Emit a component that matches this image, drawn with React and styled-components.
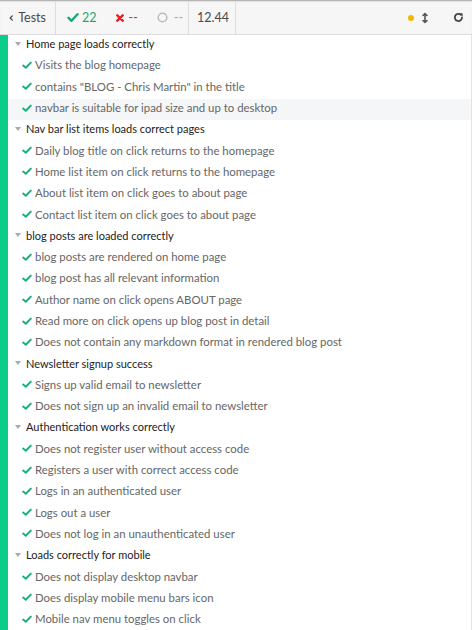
import React from "react";
import styled, { createGlobalStyle } from "styled-components";

const GlobalStyle = createGlobalStyle`
    html, body {
        margin : 0;
        padding : 0;
        background : #fff;
        font-family : Lato, "Open Sans", sans-serif;
    }
`

const Page = styled.div`
    width : 472px;
    height : 630px;
    overflow : hidden;
    display : flex;
    flex-direction : column;
`

const Header = styled.div`
    height : 35px;
    flex-shrink : 0;
    display : flex;
    align-items : stretch;
    background : #f6f6f6;
    border-top : 1px solid #b5b5b5;
    border-bottom : 1px solid #dcdcdc;
    box-sizing : border-box;
    box-shadow : inset 0 1px 1px rgba(0,0,0,0.08);
    color : #4a4a4a;
    font-size : 12.5px;
    white-space : nowrap;
`

const Section = styled.div`
    display : flex;
    align-items : center;
    gap : ${props => props.gap || 0}px;
    padding : 0 ${props => props.pad || 0}px;
    width : ${props => props.width ? props.width + "px" : "auto"};
    flex : ${props => props.grow ? 1 : "none"};
    justify-content : ${props => props.end ? "flex-end" : "flex-start"};
    border-right : ${props => props.line ? "1px solid #dcdcdc" : "none"};
    box-sizing : border-box;
`

const Stat = styled.span`
    display : flex;
    align-items : center;
    flex-shrink : 0;
    gap : ${props => props.gap || 4}px;
    color : ${props => props.color};
    margin-right : ${props => props.space || 0}px;
`

const Dot = styled.span`
    width : 6px;
    height : 6px;
    border-radius : 50%;
    background : #f7b500;
`

const Body = styled.div`
    flex : 1;
    border-left : 8px solid #0ccc8a;
    border-right : 1px solid #e4e4e4;
`

const Suite = styled.div`
    height : 21.3px;
    box-sizing : border-box;
    padding-bottom : 4px;
    display : flex;
    align-items : center;
    padding-left : 7px;
    font-size : 11px;
    color : #222;
`

const Caret = styled.span`
    width : 0;
    height : 0;
    border-left : 3.5px solid transparent;
    border-right : 3.5px solid transparent;
    border-top : 4px solid #aaa;
    margin-right : 5px;
`

const Test = styled.div`
    height : 21.3px;
    box-sizing : border-box;
    padding-bottom : 4px;
    display : flex;
    align-items : center;
    padding-left : 14px;
    font-size : 11.4px;
    color : #666;
    background : ${props => props.hover ? "#f5f6f8" : "transparent"};
`

const Check = () => (
    <svg width="10" height="10" viewBox="0 0 10 10" style={{marginRight : 3}}>
        <path d="M1.2 5.6 L3.8 7.8 L8.8 2.6" fill="none" stroke="#1bb07a" strokeWidth="2" strokeLinecap="round" strokeLinejoin="round"/>
    </svg>
)

const suites = [
    ["Home page loads correctly", ["Visits the blog homepage", "contains \"BLOG - Chris Martin\" in the title", "navbar is suitable for ipad size and up to desktop"]],
    ["Nav bar list items loads correct pages", ["Daily blog title on click returns to the homepage", "Home list item on click returns to the homepage", "About list item on click goes to about page", "Contact list item on click goes to about page"]],
    ["blog posts are loaded correctly", ["blog posts are rendered on home page", "blog post has all relevant information", "Author name on click opens ABOUT page", "Read more on click opens up blog post in detail", "Does not contain any markdown format in rendered blog post"]],
    ["Newsletter signup success", ["Signs up valid email to newsletter", "Does not sign up an invalid email to newsletter"]],
    ["Authentication works correctly", ["Does not register user without access code", "Registers a user with correct access code", "Logs in an authenticated user", "Logs out a user", "Does not log in an unauthenticated user"]],
    ["Loads correctly for mobile", ["Does not display desktop navbar", "Does display mobile menu bars icon", "Mobile nav menu toggles on click"]],
]

const App = () => {
    return(
        <>
        <GlobalStyle />
        <Page>
            <Header>
                <Section width={56} pad={9} gap={5} line>
                    <svg width="7" height="10" viewBox="0 0 7 10">
                        <path d="M5.5 1.5 L2 5 L5.5 8.5" fill="none" stroke="#444" strokeWidth="2" strokeLinecap="round" strokeLinejoin="round"/>
                    </svg>
                    Tests
                </Section>
                <Section width={133} pad={11} line>
                    <Stat color="#1ba872" space={19} gap={3}>
                        <svg width="12" height="11" viewBox="0 0 12 11">
                            <path d="M1.5 5.8 L4.5 8.8 L10.5 2.2" fill="none" stroke="#1ba872" strokeWidth="2.4" strokeLinecap="round" strokeLinejoin="round"/>
                        </svg>
                        22
                    </Stat>
                    <Stat color="#e8201f" space={19} gap={5}>
                        <svg width="8" height="8" viewBox="0 0 8 8">
                            <path d="M1.3 1.3 L6.7 6.7 M6.7 1.3 L1.3 6.7" stroke="#e8201f" strokeWidth="2.4" strokeLinecap="round"/>
                        </svg>
                        --
                    </Stat>
                    <Stat color="#aaa" gap={6}>
                        <svg width="11" height="11" viewBox="0 0 11 11">
                            <circle cx="5.5" cy="5.5" r="4.3" fill="none" stroke="#bbb" strokeWidth="1.5"/>
                        </svg>
                        --
                    </Stat>
                </Section>
                <Section width={47} pad={8} line>12.44</Section>
                <Section grow end pad={8}>
                    <Dot />
                    <svg width="8" height="12" viewBox="0 0 8 12" style={{marginLeft : 7, marginRight : 24}}>
                        <path d="M4 1.5 V10.5 M2 3.5 L4 1.5 L6 3.5 M2 8.5 L4 10.5 L6 8.5" fill="none" stroke="#555" strokeWidth="1.6" strokeLinecap="round" strokeLinejoin="round"/>
                    </svg>
                    <svg width="11" height="11" viewBox="0 0 11 11">
                        <path d="M9 5.5 A3.6 3.6 0 1 1 7.8 2.8" fill="none" stroke="#444" strokeWidth="1.8" strokeLinecap="round"/>
                        <path d="M6.2 1.2 L9.6 1.2 L9.6 4.6 Z" fill="#444"/>
                    </svg>
                </Section>
            </Header>
            <Body>
                {suites.map(([title, tests]) => (
                    <div key={title}>
                        <Suite><Caret />{title}</Suite>
                        {tests.map(t => (
                            <Test key={t} hover={t.startsWith("navbar is")}><Check />{t}</Test>
                        ))}
                    </div>
                ))}
            </Body>
        </Page>
        </>
    )
}

export default App;
